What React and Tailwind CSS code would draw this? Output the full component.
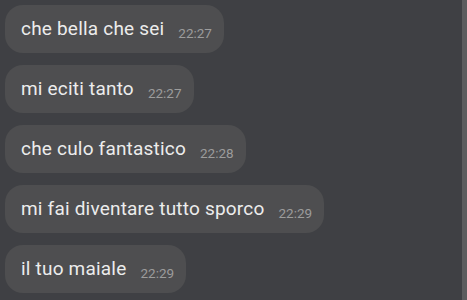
const messages = [
  { text: 'che bella che sei', time: '22:27' },
  { text: 'mi eciti tanto', time: '22:27' },
  { text: 'che culo fantastico', time: '22:28' },
  { text: 'mi fai diventare tutto sporco', time: '22:29' },
  { text: 'il tuo maiale', time: '22:29' },
];

const Bubble = ({ text, time }) => (
  <div className="flex h-[48px] w-fit items-center rounded-[18px] bg-[#4e4e50] pl-[16px] pr-[12px]">
    <span className="text-[19px] tracking-[0.2px] text-[#ececec]">{text}</span>
    <span className="ml-[14px] mt-[8px] text-[13.5px] text-[#9c9c9c]">{time}</span>
  </div>
);

export default function App() {
  return (
    <div
      className="flex h-[300px] w-[467px] overflow-hidden bg-[#3f4044]"
      style={{ fontFamily: 'Roboto, "Liberation Sans", sans-serif' }}
    >
      <div className="flex flex-1 flex-col gap-[12px] pl-[5px] pt-[5px]">
        {messages.map((m, i) => (
          <Bubble key={i} text={m.text} time={m.time} />
        ))}
      </div>
      <div className="w-[5px] bg-[#5c5c5e]" />
    </div>
  );
}
